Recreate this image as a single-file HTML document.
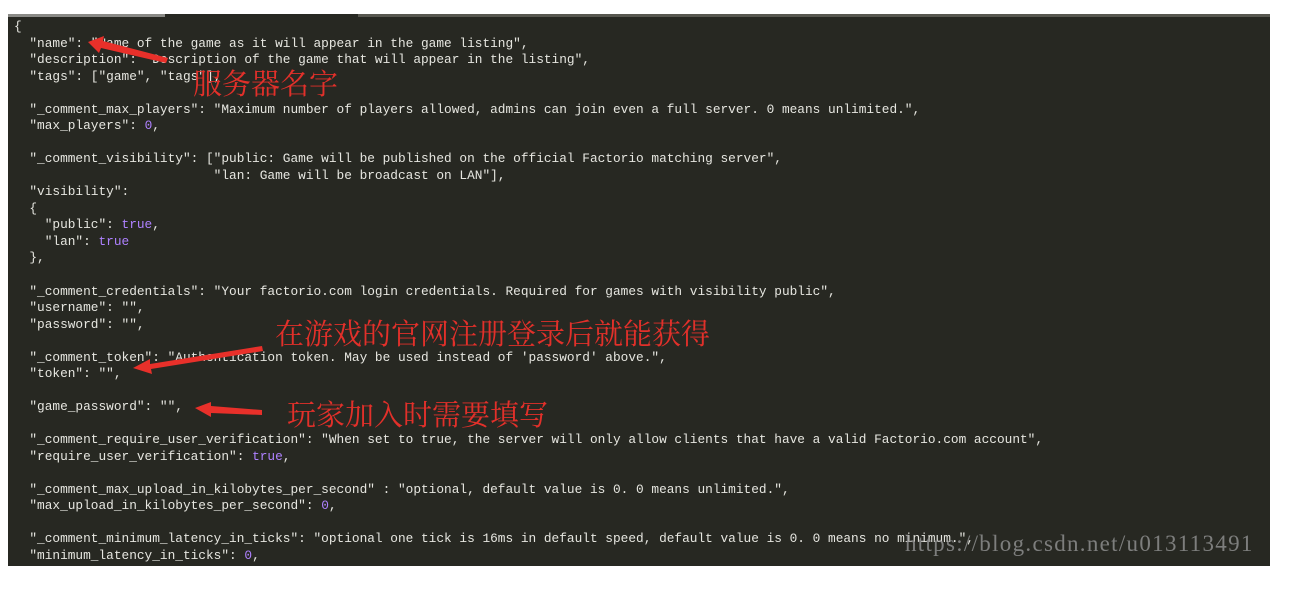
<!DOCTYPE html>
<html><head><meta charset="utf-8"><style>
body{margin:0;width:1299px;height:589px;background:#fff;position:relative;overflow:hidden}
#ed{position:absolute;left:8px;top:14px;width:1262px;height:552px;background:#272822}
.tab1{position:absolute;left:8px;top:14px;width:157px;height:3px;background:#8a8a86}
.tab2{position:absolute;left:358px;top:14px;width:912px;height:3px;background:#57574f}
pre{position:absolute;left:14px;top:19px;margin:0;font-family:"Liberation Mono",monospace;font-size:12.8px;line-height:16.53px;color:#e6e6e0}
.n{color:#ae81ff}
.cn{position:absolute;font-family:"Noto Serif CJK SC","Liberation Serif",serif;font-size:29px;color:#e2302a;line-height:1;white-space:nowrap}
.wm{position:absolute;left:905px;top:531px;font-family:"Liberation Serif",serif;font-size:23px;letter-spacing:1.3px;color:#8d8d8d;opacity:.85;white-space:nowrap}
</style></head><body>
<div id="ed"></div><div class="tab1"></div><div class="tab2"></div>
<pre>{
  "name": "Name of the game as it will appear in the game listing",
  "description": "Description of the game that will appear in the listing",
  "tags": ["game", "tags"],

  "_comment_max_players": "Maximum number of players allowed, admins can join even a full server. 0 means unlimited.",
  "max_players": <span class="n">0</span>,

  "_comment_visibility": ["public: Game will be published on the official Factorio matching server",
                          "lan: Game will be broadcast on LAN"],
  "visibility":
  {
    "public": <span class="n">true</span>,
    "lan": <span class="n">true</span>
  },

  "_comment_credentials": "Your factorio.com login credentials. Required for games with visibility public",
  "username": "",
  "password": "",

  "_comment_token": "Authentication token. May be used instead of 'password' above.",
  "token": "",

  "game_password": "",

  "_comment_require_user_verification": "When set to true, the server will only allow clients that have a valid Factorio.com account",
  "require_user_verification": <span class="n">true</span>,

  "_comment_max_upload_in_kilobytes_per_second" : "optional, default value is 0. 0 means unlimited.",
  "max_upload_in_kilobytes_per_second": <span class="n">0</span>,

  "_comment_minimum_latency_in_ticks": "optional one tick is 16ms in default speed, default value is 0. 0 means no minimum.",
  "minimum_latency_in_ticks": <span class="n">0</span>,
</pre>
<div class="cn" style="left:193px;top:68px">服务器名字</div>
<div class="cn" style="left:275px;top:318px">在游戏的官网注册登录后就能获得</div>
<div class="cn" style="left:287px;top:399px">玩家加入时需要填写</div>
<div class="wm">https://blog.csdn.net/u013113491</div>
<svg width="1299" height="589" style="position:absolute;left:0;top:0">
<g fill="#e8302a">
<polygon points="88,42 104,36 103,41 168,58 166,63 101,48 99,53"/>
<polygon points="133,368 150,359 150,364 262,346 263,351 151,369 152,374"/>
<polygon points="195,408 211,402 211,406 262,410 262,415 211,413 211,417"/>
</g></svg>
</body></html>
